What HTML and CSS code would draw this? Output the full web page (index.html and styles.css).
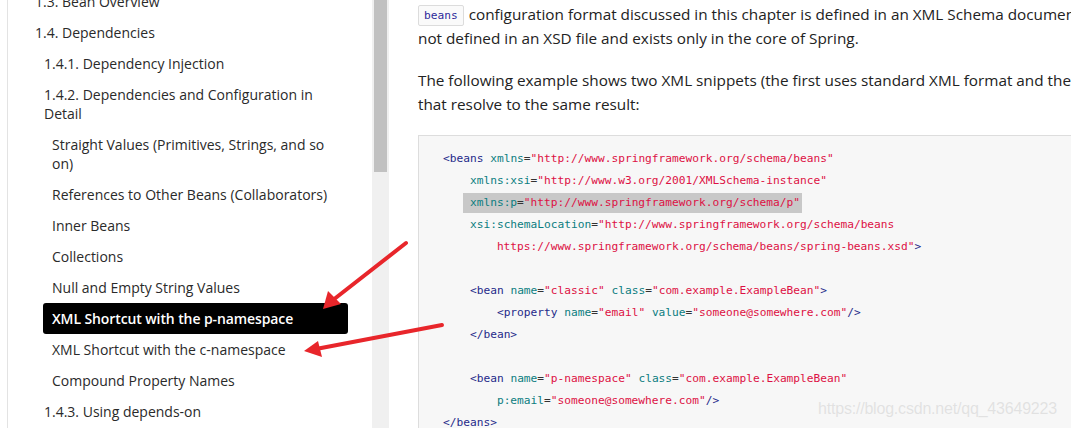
FILE: index.html
```html
<!DOCTYPE html>
<html lang="en">
<head>
<meta charset="utf-8">
<title>Spring Docs - p-namespace</title>
<link rel="stylesheet" href="styles.css">
</head>
<body>
<div class="page">
  <aside class="sidebar">
    <nav class="toc">
      <ul class="lvl1">
        <li><a>1.3. Bean Overview</a></li>
        <li><a>1.4. Dependencies</a>
          <ul class="lvl2">
            <li><a>1.4.1. Dependency Injection</a></li>
            <li><a>1.4.2. Dependencies and Configuration in Detail</a>
              <ul class="lvl3">
                <li><a>Straight Values (Primitives, Strings, and so on)</a></li>
                <li><a>References to Other Beans (Collaborators)</a></li>
                <li><a>Inner Beans</a></li>
                <li><a>Collections</a></li>
                <li><a>Null and Empty String Values</a></li>
                <li><a class="active">XML Shortcut with the p-namespace</a></li>
                <li><a>XML Shortcut with the c-namespace</a></li>
                <li><a>Compound Property Names</a></li>
              </ul>
            </li>
            <li><a>1.4.3. Using depends-on</a></li>
          </ul>
        </li>
      </ul>
    </nav>
    <div class="scrollbar"><div class="thumb"></div></div>
  </aside>
  <main class="content">
    <p class="para"><code class="inline">beans</code> configuration format discussed in this chapter is defined in an XML Schema document. However, the p-namespace is<br>not defined in an XSD file and exists only in the core of Spring.</p>
    <p class="para">The following example shows two XML snippets (the first uses standard XML format and the second uses the p-namespace)<br>that resolve to the same result:</p>
    <div class="codeblock">
<pre class="code"><span class="tg">&lt;beans</span> <span class="at">xmlns</span>=<span class="vl">"http://www.springframework.org/schema/beans"</span>
    <span class="at">xmlns:xsi</span>=<span class="vl">"http://www.w3.org/2001/XMLSchema-instance"</span>
    <span class="hl"><span class="at">xmlns:p</span>=<span class="vl">"http://www.springframework.org/schema/p"</span></span>
    <span class="at">xsi:schemaLocation</span>=<span class="vl">"http://www.springframework.org/schema/beans</span>
<span class="vl">        https://www.springframework.org/schema/beans/spring-beans.xsd"</span><span class="tg">&gt;</span>

    <span class="tg">&lt;bean</span> <span class="at">name</span>=<span class="vl">"classic"</span> <span class="at">class</span>=<span class="vl">"com.example.ExampleBean"</span><span class="tg">&gt;</span>
        <span class="tg">&lt;property</span> <span class="at">name</span>=<span class="vl">"email"</span> <span class="at">value</span>=<span class="vl">"someone@somewhere.com"</span><span class="tg">/&gt;</span>
    <span class="tg">&lt;/bean&gt;</span>

    <span class="tg">&lt;bean</span> <span class="at">name</span>=<span class="vl">"p-namespace"</span> <span class="at">class</span>=<span class="vl">"com.example.ExampleBean"</span>
        <span class="at">p:email</span>=<span class="vl">"someone@somewhere.com"</span><span class="tg">/&gt;</span>
<span class="tg">&lt;/beans&gt;</span></pre>
    </div>
  </main>
  <svg class="arrows" width="1071" height="428" viewBox="0 0 1071 428" aria-hidden="true">
    <line x1="406" y1="243" x2="333" y2="300" stroke="#e8262b" stroke-width="4" stroke-linecap="round"/>
    <polygon points="323,309 328,291 341,304" fill="#e8262b"/>
    <line x1="442" y1="325" x2="316" y2="349" stroke="#e8262b" stroke-width="4" stroke-linecap="round"/>
    <polygon points="304,351 318,341 322,357" fill="#e8262b"/>
  </svg>
  <div class="watermark">https://blog.csdn.net/qq_43649223</div>
</div>
</body>
</html>
```
FILE: styles.css
```css
html, body {
  margin: 0;
  padding: 0;
  background: #ffffff;
}
body {
  width: 1071px;
  height: 428px;
  overflow: hidden;
}
.page {
  position: relative;
  display: flex;
  width: 1071px;
  height: 428px;
  overflow: hidden;
}
.sidebar {
  display: flex;
  flex: 0 0 388px;
  height: 428px;
}
.toc {
  flex: 0 0 363px;
  margin-left: 7px;
  border-left: 1px solid #e3e3e3;
  font-family: "Open Sans", "Noto Sans", sans-serif;
  font-size: 14px;
  line-height: 19px;
  color: #2a2a2a;
  overflow: hidden;
}
.toc ul {
  list-style: none;
  margin: 0;
  padding: 0;
}
.lvl1 {
  margin: -14px 0 0 27px !important;
  width: 313px;
}
.toc a {
  display: block;
  padding: 6px 8px 6px 0;
}
.lvl2 {
  margin-left: 8px !important;
}
.lvl2 > li > a {
  padding-left: 1px;
}
.lvl3 > li > a {
  padding-left: 9px;
}
.toc a.active {
  background: #000;
  color: #fff;
  border-radius: 3px;
  font-weight: 600;
  letter-spacing: -0.1px;
}
.scrollbar {
  flex: 0 0 17px;
  background: #f0f0f0;
  margin-left: 1px;
}
.thumb {
  margin: 0 2px;
  height: 172px;
  background: #c1c1c1;
}
.content {
  flex: 1 1 auto;
  min-width: 0;
  padding: 2px 0 0 29px;
  font-family: "Open Sans", "Noto Sans", sans-serif;
  font-size: 15.3px;
  color: #222;
  overflow: hidden;
}
.para {
  margin: 0 0 18px 0;
  line-height: 24px;
  white-space: nowrap;
}
.inline {
  display: inline-block;
  font-family: "DejaVu Sans Mono", "Liberation Mono", monospace;
  font-size: 11.2px;
  line-height: 19px;
  color: #2f2a9a;
  border: 1px solid #dcdcdc;
  background: #fafafa;
  padding: 0 5px;
  border-radius: 2px;
  vertical-align: 1px;
  margin: 0 1px 0 0;
}
.codeblock {
  margin-top: 19px;
  background: #f7f7f7;
  border: 1px solid #dddddd;
  border-right: none;
  padding: 12px 0 0 24px;
}
.code {
  margin: 0;
  font-family: "DejaVu Sans Mono", "Liberation Mono", monospace;
  font-size: 11.2px;
  line-height: 22px;
  color: #333;
}
.tg { color: #1f2a8a; }
.at { color: #0b7d80; }
.vl { color: #dd1144; }
.hl {
  background: #c8c8c8;
  margin-left: -7px;
  padding: 3px 2px 4px 7px;
}
.arrows {
  position: absolute;
  left: 0;
  top: 0;
  pointer-events: none;
}
.watermark {
  position: absolute;
  left: 818px;
  top: 400px;
  font-family: "Liberation Sans", Arial, sans-serif;
  font-size: 16px;
  color: rgba(200, 200, 200, 0.5);
  text-shadow: 0 0 1px rgba(255,255,255,0.6);
  letter-spacing: -0.2px;
  white-space: nowrap;
  pointer-events: none;
}
```
